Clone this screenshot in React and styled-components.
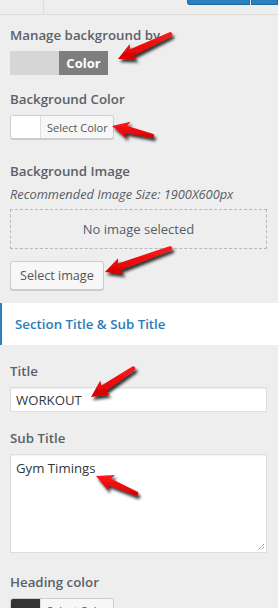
import React from "react";
import styled, { createGlobalStyle } from "styled-components";

const Global = createGlobalStyle`
  html, body { margin: 0; padding: 0; background: #eeeeee; }
  body { font-family: "Open Sans", "Noto Sans", sans-serif; }
  * { box-sizing: border-box; }
`;

const Page = styled.div`
  position: relative;
  width: 278px;
  height: 608px;
  overflow: hidden;
  background: #eeeeee;
  color: #555d66;
`;

const TopBar = styled.div`
  display: flex;
  height: 15px;
  border-bottom: 1px solid #dddddd;
`;

const TopCell = styled.div`
  width: 44px;
  border-right: 1px solid #dddddd;
`;

const Spacer = styled.div`
  flex: 1;
`;

const BlueTab = styled.div`
  width: ${(p) => p.$w}px;
  height: 5px;
  margin-left: ${(p) => p.$ml || 0}px;
  background: #2c80bd;
  border: 1px solid #1f6aa4;
  border-top: none;
  border-radius: ${(p) => (p.$first ? "0 0 0 3px" : "0")};
`;

const Content = styled.div`
  padding: 0 11px 0 10px;
`;

const Field = styled.div`
  display: flex;
  flex-direction: column;
  align-items: flex-start;
  margin-top: ${(p) => p.$mt}px;
`;

const Label = styled.div`
  font-size: 13.3px;
  line-height: 20px;
  font-weight: 600;
  color: #5a6168;
  margin-bottom: ${(p) => (p.$mb ?? 6)}px;
  white-space: nowrap;
`;

const Description = styled.div`
  font-size: 12.8px;
  line-height: 16px;
  font-style: italic;
  color: #555d66;
  margin-bottom: 7px;
  white-space: nowrap;
`;

const Toggle = styled.div`
  display: flex;
  height: 24px;
`;

const ToggleHalf = styled.div`
  width: 49px;
  display: flex;
  align-items: center;
  justify-content: center;
  font-size: 13px;
  font-weight: 700;
  color: #ffffff;
  background: ${(p) => (p.$active ? "#7e7e7e" : "#d6d6d6")};
`;

const ColorButton = styled.div`
  display: flex;
  height: 24px;
  border: 1px solid #cccccc;
  border-radius: 3px;
  overflow: hidden;
  background: #f7f7f7;
  box-shadow: 0 1px 0 #cccccc;
`;

const Swatch = styled.div`
  width: 30px;
  background: ${(p) => p.$color};
  border-right: 1px solid #dddddd;
`;

const SwatchLabel = styled.div`
  padding: 0 5px 0 6px;
  display: flex;
  align-items: center;
  font-size: 11px;
  color: #555555;
`;

const DropZone = styled.div`
  width: 100%;
  height: 40px;
  border: 1px dashed #b4b9be;
  display: flex;
  align-items: center;
  justify-content: center;
  font-size: 13px;
  color: #555d66;
  margin-bottom: 12px;
`;

const Button = styled.div`
  height: 29px;
  padding: 0 9px;
  display: flex;
  align-items: center;
  font-size: 12.6px;
  color: #555555;
  background: #f7f7f7;
  border: 1px solid #cccccc;
  border-radius: 3px;
  box-shadow: 0 1px 0 #cccccc;
`;

const SectionBand = styled.div`
  margin-top: 13px;
  height: 42px;
  background: #ffffff;
  border-left: 2px solid #2c80bd;
  display: flex;
  align-items: center;
  padding-left: 13px;
  font-size: 13.3px;
  font-weight: 600;
  color: #2b7bbb;
`;

const TextInput = styled.div`
  width: 100%;
  height: 25px;
  background: #ffffff;
  border: 1px solid #dddddd;
  box-shadow: inset 0 1px 2px rgba(0, 0, 0, 0.07);
  display: flex;
  align-items: center;
  padding-left: 5px;
  font-size: 13.2px;
  color: #32373c;
`;

const TextArea = styled.div`
  position: relative;
  width: 100%;
  height: 99px;
  background: #ffffff;
  border: 1px solid #dddddd;
  box-shadow: inset 0 1px 2px rgba(0, 0, 0, 0.07);
  padding: 3px 5px;
  font-size: 13.2px;
  line-height: 20px;
  color: #32373c;
`;

const Grip = styled.svg`
  position: absolute;
  right: 1px;
  bottom: 1px;
`;

const Overlay = styled.svg`
  position: absolute;
  left: 0;
  top: 0;
  pointer-events: none;
`;

function arrowPath(x1, y1, x2, y2) {
  const dx = x2 - x1;
  const dy = y2 - y1;
  const L = Math.hypot(dx, dy);
  const ux = dx / L;
  const uy = dy / L;
  const nx = -uy;
  const ny = ux;
  const pt = (a, b) => [x1 + ux * a + nx * b, y1 + uy * a + ny * b];
  const H = 17;
  const pts = [
    pt(0, -2.2),
    pt(L - H + 2, -3.6),
    pt(L - H, -8.5),
    pt(L, 0),
    pt(L - H, 8.5),
    pt(L - H + 2, 3.6),
    pt(0, 2.2),
  ];
  const [t0, ...rest] = pts;
  const c1 = pt(-2.5, 0);
  const f = (p) => `${p[0].toFixed(1)},${p[1].toFixed(1)}`;
  return (
    `M${f(t0)} ` +
    rest.slice(0, 5).map((p) => `L${f(p)}`).join(" ") +
    ` L${f(rest[5])} Q${f(c1)} ${f(t0)} Z`
  );
}

const arrows = [
  [171, 34, 118, 59],
  [153, 136, 112, 126],
  [171, 248, 105, 272],
  [134, 368, 91, 397],
  [137, 494, 96, 476],
];

function Arrows() {
  return (
    <Overlay width="278" height="608" viewBox="0 0 278 608">
      <defs>
        <filter id="sh" x="-30%" y="-30%" width="160%" height="160%">
          <feDropShadow dx="2" dy="3" stdDeviation="1.8" floodColor="#000" floodOpacity="0.8" />
        </filter>
        <linearGradient id="rg" x1="0" y1="0" x2="0" y2="1">
          <stop offset="0" stopColor="#ff1a1a" />
          <stop offset="1" stopColor="#d90000" />
        </linearGradient>
      </defs>
      {arrows.map((a, i) => (
        <path key={i} d={arrowPath(...a)} fill="url(#rg)" filter="url(#sh)" />
      ))}
    </Overlay>
  );
}

export default function App() {
  return (
    <Page>
      <Global />
      <TopBar>
        <TopCell />
        <Spacer />
        <BlueTab $w={63} $first />
        <BlueTab $w={27} $ml={1} />
      </TopBar>
      <Content>
        <Field $mt={10}>
          <Label>Manage background by</Label>
          <Toggle>
            <ToggleHalf />
            <ToggleHalf $active>Color</ToggleHalf>
          </Toggle>
        </Field>
        <Field $mt={14}>
          <Label>Background Color</Label>
          <ColorButton>
            <Swatch $color="#ffffff" />
            <SwatchLabel>Select Color</SwatchLabel>
          </ColorButton>
        </Field>
        <Field $mt={22}>
          <Label $mb={5}>Background Image</Label>
          <Description>Recommended Image Size: 1900X600px</Description>
          <DropZone>No image selected</DropZone>
          <Button>Select image</Button>
        </Field>
      </Content>
      <SectionBand>Section Title &amp; Sub Title</SectionBand>
      <Content>
        <Field $mt={16}>
          <Label>Title</Label>
          <TextInput>WORKOUT</TextInput>
        </Field>
        <Field $mt={16}>
          <Label>Sub Title</Label>
          <TextArea>
            Gym Timings
            <Grip width="9" height="9" viewBox="0 0 9 9">
              <path d="M8 2 L2 8 M8 5 L5 8" stroke="#666" strokeWidth="1" strokeDasharray="1 1" />
            </Grip>
          </TextArea>
        </Field>
        <Field $mt={19}>
          <Label>Heading color</Label>
          <ColorButton>
            <Swatch $color="#333333" />
            <SwatchLabel>Select Color</SwatchLabel>
          </ColorButton>
        </Field>
      </Content>
      <Arrows />
    </Page>
  );
}
